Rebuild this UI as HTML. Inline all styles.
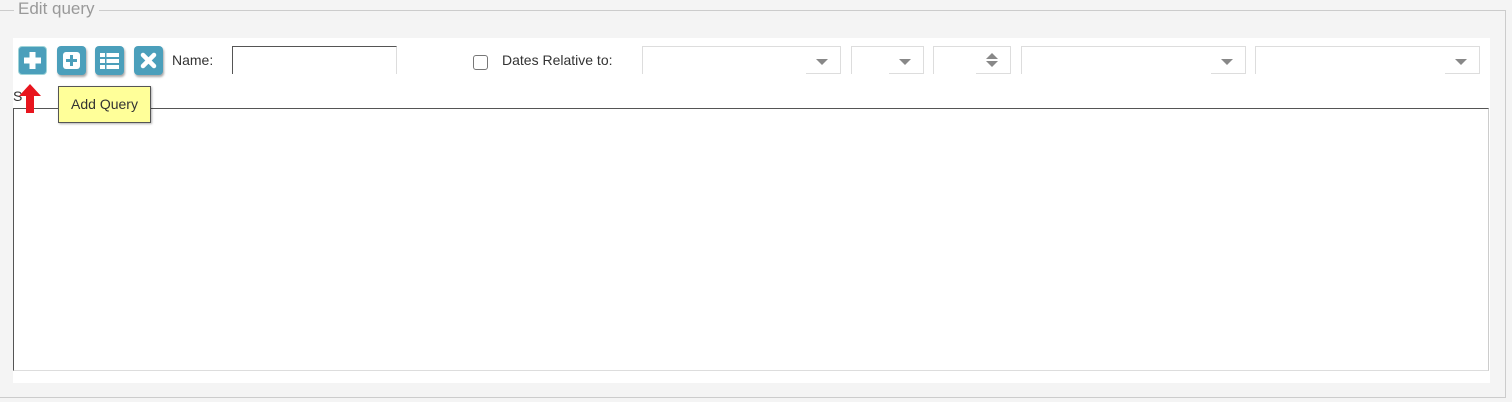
<!DOCTYPE html>
<html><head><style>
body{margin:0;width:1512px;height:402px;background:#f4f4f4;font-family:"Liberation Sans",sans-serif;position:relative;overflow:hidden}
.a{position:absolute}
.fs{left:0;top:10px;width:1505px;height:386px;border-top:1px solid #ccc;border-right:1px solid #ccc;border-bottom:1px solid #ccc}
.lg{left:14px;top:-1px;padding:0 4px;background:#f4f4f4;color:#999;font-size:17px;line-height:20px}
.panel{left:13px;top:38px;width:1477px;height:345px;background:#fff}
.btn{top:46px;width:29px;height:29px;background:#4b9fbb;border-radius:4px;box-shadow:1px 2px 2px rgba(0,0,0,.35)}
.btn svg{position:absolute;left:0;top:0}
.dd{top:46px;height:27px;border:1px solid #ddd;border-bottom:none}
.dd .bb{position:absolute;right:0;bottom:0;width:34px;border-bottom:1px solid #ddd}
.arr{position:absolute;right:12px;top:12px;width:0;height:0;border-left:6px solid transparent;border-right:6px solid transparent;border-top:6px solid #888}
.t{font-size:14px;color:#333}
</style></head><body>
<div class="a fs"></div>
<div class="a lg">Edit query</div>
<div class="a panel"></div>
<div class="a btn" style="left:18px;border:1px solid #9fd4d8;width:27px;height:27px;box-shadow:none">
<svg width="27" height="27"><rect x="10.5" y="5" width="6" height="17" fill="#fff"/><rect x="5" y="10.5" width="17" height="6" fill="#fff"/></svg></div>
<div class="a btn" style="left:57px"><svg width="29" height="29"><rect x="6" y="6" width="17" height="17" rx="3" fill="#fff"/><rect x="13" y="9" width="3" height="11" fill="#4b9fbb"/><rect x="9" y="13" width="11" height="3" fill="#4b9fbb"/></svg></div>
<div class="a btn" style="left:95px"><svg width="29" height="29"><rect x="5" y="7" width="19" height="4" fill="#fff"/><rect x="5" y="13" width="19" height="4" fill="#fff"/><rect x="5" y="19" width="19" height="4" fill="#fff"/><rect x="10" y="7" width="1.5" height="16" fill="#4b9fbb"/></svg></div>
<div class="a btn" style="left:134px"><svg width="29" height="29"><path d="M9 9L20 20M20 9L9 20" stroke="#fff" stroke-width="4.5" stroke-linecap="round"/></svg></div>
<div class="a t" style="left:172px;top:52px">Name:</div>
<div class="a" style="left:232px;top:46px;width:163px;height:27px;border:1px solid #555;border-bottom:none;border-right:1px solid #ddd"></div>
<div class="a" style="left:473px;top:55px;width:13px;height:13px;border:1px solid #777;border-radius:3px"></div>
<div class="a t" style="left:502px;top:52px">Dates Relative to:</div>
<div class="a dd" style="left:642px;width:197px"><div class="arr"></div><div class="bb"></div></div>
<div class="a dd" style="left:851px;width:71px"><div class="arr"></div><div class="bb"></div></div>
<div class="a dd" style="left:933px;width:76px"><div class="arr" style="top:6px;border-top:none;border-bottom:6px solid #888"></div><div class="arr" style="top:14px"></div><div class="bb"></div></div>
<div class="a dd" style="left:1021px;width:223px"><div class="arr"></div><div class="bb"></div></div>
<div class="a dd" style="left:1255px;width:223px"><div class="arr"></div><div class="bb"></div></div>
<div class="a t" style="left:13px;top:88px">S</div>
<div class="a" style="left:13px;top:108px;width:1474px;height:261px;border-top:1px solid #555;border-left:1px solid #555;border-right:1px solid #ccc;border-bottom:1px solid #ddd;background:#fff"></div>
<svg class="a" style="left:18px;top:84px" width="24" height="30"><path d="M12 0L23 12H16V29H8V12H1Z" fill="#e8151e"/></svg>
<div class="a" style="left:58px;top:86px;width:91px;height:35px;background:#ffff99;border:1px solid #555;box-shadow:1px 1px 2px rgba(0,0,0,.3);font-size:14px;color:#333;line-height:35px;text-align:center">Add Query</div>
</body></html>
